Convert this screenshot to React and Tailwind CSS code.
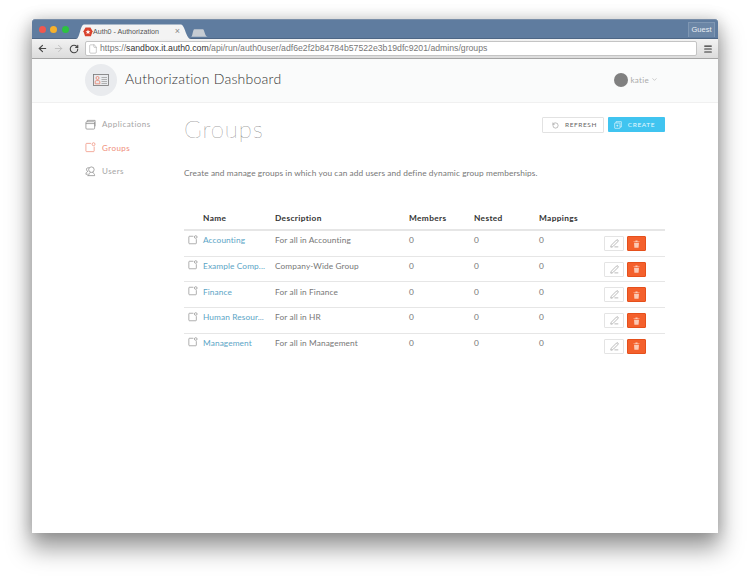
import React from 'react';
import { ArrowLeft, ArrowRight, RotateCw, File, Menu, ChevronDown, RotateCcw, PenLine } from 'lucide-react';

const font = { fontFamily: 'Lato, "Open Sans", sans-serif' };

const groups = [
  { name: 'Accounting', description: 'For all in Accounting' },
  { name: 'Example Comp...', description: 'Company-Wide Group' },
  { name: 'Finance', description: 'For all in Finance' },
  { name: 'Human Resour...', description: 'For all in HR' },
  { name: 'Management', description: 'For all in Management' },
];

// Square with a small circle on the top right corner, used for groups
const GroupIcon = ({ className }) => (
  <svg viewBox="0 0 12 12" fill="none" stroke="currentColor" strokeWidth="0.8" className={className}>
    <path d="M6.5 1.5H1.8Q1 1.5 1 2.3V9.7Q1 10.5 1.8 10.5H9.2Q10 10.5 10 9.7V5" />
    <circle cx="9.3" cy="2.4" r="1.6" />
  </svg>
);

const AppsIcon = ({ className }) => (
  <svg viewBox="0 0 12 12" fill="none" stroke="currentColor" strokeWidth="0.8" className={className}>
    <rect x="1" y="3" width="9.5" height="8" rx="1" />
    <path d="M1 5H10.5M2.5 3V1.5H11V8" />
  </svg>
);

const UsersIcon = ({ className }) => (
  <svg viewBox="0 0 12 12" fill="none" stroke="currentColor" strokeWidth="0.8" className={className}>
    <circle cx="7" cy="4" r="3" />
    <path d="M4 10.5C4 8.5 5 7.5 6 7M8 7C9.5 7.5 10.5 8.5 10.5 10.5H2.5M4.5 2H3C2 2 1.5 3 1.7 4.2 1.8 5.2 2.4 5.6 3 6 1.8 6.5 1 7.5 1 9H3" />
  </svg>
);

const CreateIcon = ({ className }) => (
  <svg viewBox="0 0 12 12" fill="none" stroke="currentColor" strokeWidth="1" className={className}>
    <rect x="1" y="3" width="8" height="8" rx="0.5" />
    <path d="M3 3V1H11V9H9M5 5.5V8.5M3.5 7H6.5" />
  </svg>
);

const TrashIcon = () => (
  <svg viewBox="0 0 8 9" className="w-[7px] h-[8px]">
    <path d="M0.5 1.5H7.5V2.3H0.5ZM2.8 1.5V0.5H5.2V1.5Z" fill="#fbc9b5" />
    <path d="M1.2 3H6.8L6.4 8.7H1.6Z" fill="#fbc9b5" />
  </svg>
);

const AuthLogo = () => (
  <svg viewBox="0 0 12 12" className="w-[10px] h-[10px] shrink-0">
    <path d="M3 0.5H9L11.5 5 9.5 11H2.5L0.5 5Z" fill="#d8412c" />
    <path d="M6 3L6.8 5.2H9L7.2 6.5 7.9 8.6 6 7.3 4.1 8.6 4.8 6.5 3 5.2H5.2Z" fill="#fff" />
  </svg>
);

const BrowserChrome = () => (
  <div className="shrink-0" style={{ fontFamily: '"Liberation Sans", sans-serif' }}>
    {/* title bar */}
    <div className="h-[20px] bg-[#5f7c9f] border-t border-b border-t-[#7a8ea8] border-b-[#4d6685] flex items-end rounded-t-[3px]">
      <div className="flex gap-[4.5px] pl-[6.5px] self-start mt-[5.5px] w-[44px] shrink-0">
        <span className="w-[7px] h-[7px] rounded-full bg-[#f0584f]" />
        <span className="w-[7px] h-[7px] rounded-full bg-[#f6b12c]" />
        <span className="w-[7px] h-[7px] rounded-full bg-[#2dc240]" />
      </div>
      <div className="relative w-[115px] h-[15px] -mb-px flex items-center pt-[1px] pl-[7px] pr-[6px] text-[7.1px] text-[#555]">
        <svg viewBox="0 0 115 15" className="absolute inset-0 w-full h-full">
          <path d="M0 15C4 15 4 1 8 0.5H105C109 1 110 15 115 15Z" fill="#f3f3f3" />
        </svg>
        <span className="relative flex items-center flex-1">
          <AuthLogo />
          Auth0 - Authorization
        </span>
        <span className="relative text-[#888] text-[9px] mr-[5px]">×</span>
      </div>
      <svg viewBox="0 0 20 9" className="w-[17px] h-[8px] mb-[1px]">
        <path d="M0 9C2 9 2 0 4 0H14C16 0 16 9 20 9Z" fill="#c6ccd3" />
      </svg>
      <div className="flex-1" />
      <div className="self-start mt-[2px] mr-[3px] w-[27px] h-[15px] bg-[#6b86a6] border border-[#7f97b3] border-b-0 text-[7.5px] text-[#e8edf3] flex items-center justify-center">
        Guest
      </div>
    </div>
    {/* toolbar */}
    <div className="h-[20px] bg-gradient-to-b from-[#f2f2f2] to-[#dcdcdc] border-b border-[#a5a5a5] flex items-center">
      <div className="flex items-center gap-[5px] pl-[5px] w-[53px] shrink-0">
        <ArrowLeft size={11} strokeWidth={2.4} className="text-[#444]" />
        <ArrowRight size={11} strokeWidth={2} className="text-[#bdbdbd]" />
        <RotateCw size={10} strokeWidth={2.6} className="text-[#444]" />
      </div>
      <div className="w-[612px] h-[15px] bg-white border border-[#c4c4c4] rounded-[2px] flex items-center pl-[2px] gap-[2px] text-[8.7px] text-[#777] whitespace-nowrap">
        <File size={10} strokeWidth={1.2} className="text-[#999] shrink-0" />
        <span>
          https://<span className="text-[#333]">sandbox.it.auth0.com</span>/api/run/auth0user/adf6e2f2b84784b57522e3b19dfc9201/admins/groups
        </span>
      </div>
      <Menu size={10} strokeWidth={2.6} className="text-[#333] ml-[6px]" />
    </div>
  </div>
);

const Header = () => (
  <div className="h-[44px] bg-[#fafbfb] border-b border-[#f0f0f0] flex items-center pb-[2px] pl-[53px] pr-[60px] shrink-0">
    <div className="w-[32px] h-[32px] rounded-full bg-[#e9ebee] flex items-center justify-center">
      <svg viewBox="0 0 16 13" fill="none" className="w-[16px] h-[13px]">
        <rect x="0.5" y="1.5" width="15" height="11" stroke="#777" strokeWidth="0.8" />
        <circle cx="4.5" cy="5" r="1.5" stroke="#ea7f68" strokeWidth="0.8" />
        <path d="M2.2 10.8V8.8Q2.2 7.6 3.4 7.6H5.6Q6.8 7.6 6.8 8.8V10.8Z" stroke="#ea7f68" strokeWidth="0.8" />
        <path d="M8.5 4.5H14M8.5 6.5H14M8.5 8.5H14M8.5 10.5H14" stroke="#888" strokeWidth="0.6" />
      </svg>
    </div>
    <div className="ml-[8px] -mt-[3px] text-[14px] font-light text-[#333] tracking-[0.25px] flex-1" style={font}>Authorization Dashboard</div>
    <div className="w-[14px] h-[14px] rounded-full bg-[#808080]" />
    <span className="ml-[3px] text-[8px] text-[#aaa] tracking-[0.3px]" style={font}>katie</span>
    <ChevronDown size={7} className="text-[#aaa] ml-[2px]" />
  </div>
);

const Sidebar = () => (
  <div className="w-[100px] shrink-0 pt-[16px] pl-[1px] flex flex-col gap-[13.5px] text-[8px] tracking-[0.45px] text-[#a5a5a5]" style={font}>
    <div className="flex items-center gap-[6px] h-[10px]">
      <AppsIcon className="w-[11px] h-[11px] text-[#888]" />
      <span>Applications</span>
    </div>
    <div className="flex items-center gap-[6px] h-[10px] text-[#ef8d78]">
      <GroupIcon className="w-[11px] h-[11px]" />
      <span>Groups</span>
    </div>
    <div className="flex items-center gap-[6px] h-[10px]">
      <UsersIcon className="w-[11px] h-[11px] text-[#888]" />
      <span>Users</span>
    </div>
  </div>
);

const Row = ({ group, last }) => (
  <div className={`h-[25.7px] flex items-start leading-[10px] text-[8.3px] text-[#777] tracking-[0.1px] ${last ? '' : 'border-b border-[#e6e6e6]'}`}>
    <div className="w-[19px] pl-[4px] pt-[3.5px] shrink-0">
      <GroupIcon className="w-[10px] h-[10px] text-[#888]" />
    </div>
    <div className="w-[72px] pt-[4.3px] shrink-0 text-[#5ba5c6] whitespace-nowrap">{group.name}</div>
    <div className="w-[134px] pt-[4.3px] shrink-0 whitespace-nowrap">{group.description}</div>
    <div className="w-[65px] pt-[4.3px] shrink-0">0</div>
    <div className="w-[65px] pt-[4.3px] shrink-0">0</div>
    <div className="w-[65px] pt-[4.3px] shrink-0">0</div>
    <div className="flex gap-[3px] mt-[5px]">
      <button className="w-[20px] h-[15px] bg-white border border-[#e4e4e4] rounded-[1px] flex items-center justify-center">
        <PenLine size={9} strokeWidth={1.2} className="text-[#666]" />
      </button>
      <button className="w-[19px] h-[15px] bg-[#f4602c] border border-[#e5501c] rounded-[1px] flex items-center justify-center">
        <TrashIcon />
      </button>
    </div>
  </div>
);

const Groups = () => (
  <div className="w-[481px] shrink-0 pt-[9px]" style={font}>
    <div className="flex items-start justify-between h-[46px]">
      <h1 className="text-[24px] font-extralight leading-[34px] text-[#444] tracking-[0.9px]">Groups</h1>
      <div className="flex gap-[4px] mt-[5px] text-[6.5px] tracking-[0.6px]">
        <button className="w-[62px] h-[16px] pl-[3px] bg-white border border-[#e2e2e2] rounded-[1px] text-[#666] flex items-center justify-center gap-[6px]">
          <RotateCcw size={7} strokeWidth={1.4} />
          REFRESH
        </button>
        <button className="w-[57px] h-[15px] pr-[4px] bg-[#40c4f0] rounded-[1px] text-[#e8f8fe] flex items-center justify-center gap-[6px]">
          <CreateIcon className="w-[8px] h-[8px]" />
          CREATE
        </button>
      </div>
    </div>
    <p className="mt-[9px] text-[8.3px] leading-[12px] text-[#777] tracking-[0.09px]">
      Create and manage groups in which you can add users and define dynamic group memberships.
    </p>
    <div className="mt-[33px]">
      <div className="h-[16px] pt-[1px] border-b-2 border-[#e6e6e6] flex text-[8.3px] font-bold text-[#333] tracking-[0.35px] box-content leading-[10px]">
        <div className="w-[19px] shrink-0" />
        <div className="w-[72px] shrink-0">Name</div>
        <div className="w-[134px] shrink-0">Description</div>
        <div className="w-[65px] shrink-0">Members</div>
        <div className="w-[65px] shrink-0">Nested</div>
        <div className="w-[65px] shrink-0">Mappings</div>
      </div>
      {groups.map((group, i) => (
        <Row key={group.name} group={group} last={i === groups.length - 1} />
      ))}
    </div>
  </div>
);

const App = () => (
  <div className="w-[750px] h-[579px] bg-white pt-[19px] pl-[32px] overflow-hidden">
    <div className="w-[686px] h-[514px] bg-white flex flex-col shadow-[0_14px_22px_2px_rgba(0,0,0,0.38),0_0_14px_rgba(0,0,0,0.18)]">
      <BrowserChrome />
      <Header />
      <div className="flex pl-[52px]">
        <Sidebar />
        <Groups />
      </div>
    </div>
  </div>
);

export default App;
